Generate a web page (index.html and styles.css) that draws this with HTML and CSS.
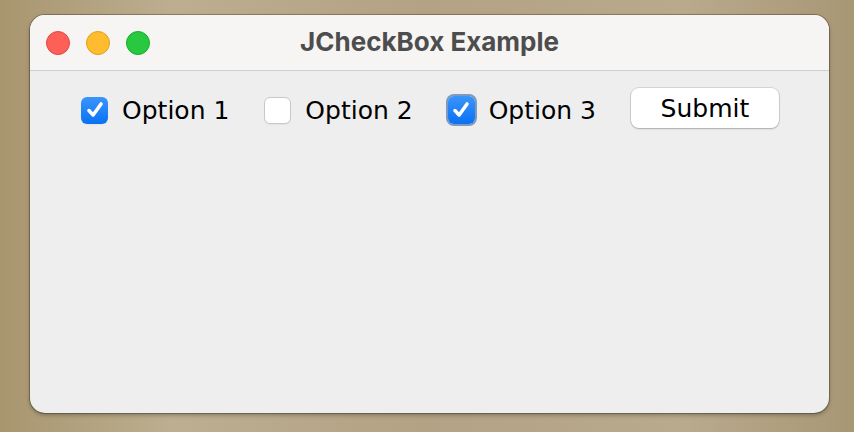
FILE: index.html
```html
<!DOCTYPE html>
<html lang="en">
<head>
    <meta charset="UTF-8">
    <title>JCheckBox Example</title>
    <link rel="stylesheet" href="styles.css">
</head>
<body>
    <div class="window">
        <div class="titlebar">
            <div class="lights">
                <span class="light red"></span>
                <span class="light yellow"></span>
                <span class="light green"></span>
            </div>
            <div class="title">JCheckBox Example</div>
        </div>
        <div class="content">
            <label class="check">
                <span class="box checked">
                    <svg viewBox="0 0 20 20" width="22" height="22"><path d="M4.5 10.5 L8.3 14.5 L15.5 4.5" fill="none" stroke="#fff" stroke-width="3.2" stroke-linecap="round" stroke-linejoin="round"/></svg>
                </span>
                <span class="text">Option 1</span>
            </label>
            <label class="check">
                <span class="box"></span>
                <span class="text">Option 2</span>
            </label>
            <label class="check">
                <span class="box checked focused">
                    <svg viewBox="0 0 20 20" width="22" height="22"><path d="M4.5 10.5 L8.3 14.5 L15.5 4.5" fill="none" stroke="#fff" stroke-width="3.2" stroke-linecap="round" stroke-linejoin="round"/></svg>
                </span>
                <span class="text">Option 3</span>
            </label>
            <button class="submit">Submit</button>
        </div>
    </div>
</body>
</html>
```

FILE: styles.css
```css
html, body { margin: 0; height: 100%; }
body { background: linear-gradient(90deg, #a8966f 0%, #bcae8f 20%, #b3a283 50%, #b9aa8c 80%, #a89775 100%); padding: 15px 0 0 30px; box-sizing: border-box; font-family: "DejaVu Sans", sans-serif; }
.window { width: 799px; height: 398px; border-radius: 15px; background: #eeeeee; overflow: hidden; box-shadow: 0 0 0 1px rgba(0,0,0,0.25), 0 2px 4px rgba(0,0,0,0.3); display: flex; flex-direction: column; }
.titlebar { height: 55px; background: #f6f5f4; border-bottom: 1px solid #cfcfcf; display: flex; align-items: center; position: relative; }
.lights { display: flex; gap: 16px; padding-left: 16px; }
.light { width: 24px; height: 24px; border-radius: 50%; box-sizing: border-box; }
.red { background: #fe5f57; border: 1px solid #e2463f; }
.yellow { background: #febc2e; border: 1px solid #e1a116; }
.green { background: #28c840; border: 1px solid #14ae2a; }
.title { position: absolute; left: 0; right: 0; text-align: center; font-family: Inter, sans-serif; font-weight: bold; font-size: 26px; color: #4d4d4d; top: 11px; }
.content { display: flex; justify-content: center; align-items: center; gap: 35px; padding-top: 21px; padding-left: 1px; }
.check { display: flex; align-items: center; gap: 14px; }
.box { flex-shrink: 0; width: 27px; height: 27px; border-radius: 6px; background: #fff; border: 1px solid #c8c8c8; box-sizing: border-box; display: flex; align-items: center; justify-content: center; box-shadow: 0 1px 1px rgba(0,0,0,0.05); }
.box.checked { background: linear-gradient(#3a95fb, #0a71f4); border: none; }
.box.focused { box-shadow: 0 0 0 2px #7e99bd; width: 27px; height: 28px; }
.text { font-size: 25px; color: #000; }
.submit { width: 148px; height: 40px; margin-top: -4px; border: none; border-radius: 8px; background: #fff; box-shadow: 0 0 0 1px rgba(0,0,0,0.1), 0 1px 2px rgba(0,0,0,0.2); font-family: "DejaVu Sans", sans-serif; font-size: 25px; color: #000; padding: 0; }
```
